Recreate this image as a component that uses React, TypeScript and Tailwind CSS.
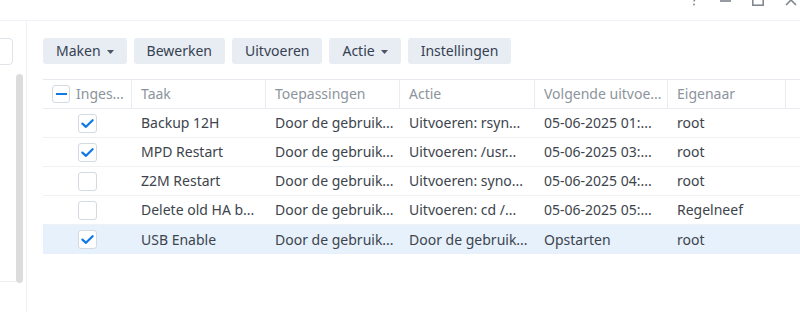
import React from "react";

const Caret = () => (
  <svg width="7" height="4" viewBox="0 0 7 4" className="ml-[6px] mt-[1px]">
    <path d="M0 0 L7 0 L3.5 4 Z" fill="#4a5563" />
  </svg>
);

const Btn = ({ label, caret }: { label: string; caret?: boolean }) => (
  <div className="h-[26px] px-[13px] rounded-[3px] bg-[#e8edf3] text-[#364152] flex items-center text-[14px] leading-none">
    <span>{label}</span>
    {caret && <Caret />}
  </div>
);

const Check = ({ checked }: { checked: boolean }) => (
  <div className="w-[19px] h-[19px] rounded-[3px] border border-[#d3dae2] bg-white flex items-center justify-center">
    {checked && (
      <svg width="17" height="17" viewBox="0 0 17 17">
        <path d="M3.4 8.6 L7 11.8 L13.6 5.2" fill="none" stroke="#1479e6" strokeWidth="2.3" strokeLinecap="round" strokeLinejoin="round" />
      </svg>
    )}
  </div>
);

const rows = [
  { c: true, taak: "Backup 12H", app: "Door de gebruik...", actie: "Uitvoeren: rsyn...", next: "05-06-2025 01:...", owner: "root" },
  { c: true, taak: "MPD Restart", app: "Door de gebruik...", actie: "Uitvoeren: /usr...", next: "05-06-2025 03:...", owner: "root" },
  { c: false, taak: "Z2M Restart", app: "Door de gebruik...", actie: "Uitvoeren: syno...", next: "05-06-2025 04:...", owner: "root" },
  { c: false, taak: "Delete old HA b...", app: "Door de gebruik...", actie: "Uitvoeren: cd /...", next: "05-06-2025 05:...", owner: "Regelneef" },
  { c: true, taak: "USB Enable", app: "Door de gebruik...", actie: "Door de gebruik...", next: "Opstarten", owner: "root", sel: true },
];

const Cell = ({ w, children, head }: { w: string; children?: React.ReactNode; head?: boolean }) => (
  <div className={`${w} shrink-0 h-full flex items-center pl-[9px] pb-[1px] overflow-hidden whitespace-nowrap ${head ? "border-r border-[#e9ecf0] text-[#8c949d]" : ""}`}>
    <span>{children}</span>
  </div>
);

export default function App() {
  return (
    <div className="w-[800px] h-[312px] bg-white overflow-hidden flex flex-col text-[14px] text-[#3d444c]" style={{ fontFamily: "'Noto Sans', 'Open Sans', sans-serif" }}>
      {/* title bar */}
      <div className="h-[21px] shrink-0 border-b border-[#eef1f5] overflow-hidden flex items-start pl-[689px]">
        <svg width="10" height="12" viewBox="0 0 10 12" className="-mt-[6px]">
          <path d="M2 3 C2 0.5 8 0.5 8 3 C8 5 5 5 5 7.5" fill="none" stroke="#7b828a" strokeWidth="1.4" />
          <circle cx="5" cy="10.5" r="0.9" fill="#7b828a" />
        </svg>
        <svg width="11" height="12" viewBox="0 0 11 12" className="-mt-[10px] ml-[21px]">
          <path d="M0 11 H11" stroke="#7b828a" strokeWidth="1.6" />
        </svg>
        <svg width="12" height="12" viewBox="0 0 12 12" className="-mt-[6px] ml-[21px]">
          <rect x="0.8" y="0.8" width="10.4" height="10.4" fill="none" stroke="#7b828a" strokeWidth="1.5" />
        </svg>
        <svg width="12" height="12" viewBox="0 0 12 12" className="-mt-[6px] ml-[21px]">
          <path d="M1 1 L11 11 M11 1 L1 11" fill="none" stroke="#7b828a" strokeWidth="1.5" />
        </svg>
      </div>

      <div className="flex-1 flex min-h-0">
        {/* left panel */}
        <div className="w-[27px] shrink-0 border-r border-[#eef1f5] flex">
          <div className="w-[16px] flex flex-col">
            <div className="mt-[17px] h-[27px] w-[25px] -ml-[12px] rounded-[4px] border border-[#dfe4ea] bg-white" />
            <div className="h-[217px] border-b border-[#eceff2]" />
          </div>
          <div className="w-[7px]">
            <div className="mt-[53px] h-[209px] w-[7px] rounded-[4px] bg-[#dcdcdc]" />
          </div>
        </div>

        {/* main */}
        <div className="flex-1 pl-[16px] pt-[17px] min-w-0">
          <div className="flex gap-[7px]">
            <Btn label="Maken" caret />
            <Btn label="Bewerken" />
            <Btn label="Uitvoeren" />
            <Btn label="Actie" caret />
            <Btn label="Instellingen" />
          </div>

          <div className="mt-[15px] border-t border-[#e6e9ed]">
            <div className="h-[29px] flex border-b border-[#e9ecf0]">
              <div className="w-[89px] shrink-0 h-full flex items-center pl-[9px] border-r border-[#e9ecf0] text-[#8c949d] whitespace-nowrap overflow-hidden">
                <div className="w-[18px] h-[18px] shrink-0 rounded-[3px] border border-[#d3dae2] bg-white flex items-center justify-center">
                  <div className="w-[11px] h-[2px] bg-[#1479e6]" />
                </div>
                <span className="ml-[6px] pb-[1px]">Inges...</span>
              </div>
              <Cell w="w-[134px]" head>Taak</Cell>
              <Cell w="w-[134px]" head>Toepassingen</Cell>
              <Cell w="w-[135px]" head>Actie</Cell>
              <Cell w="w-[133px]" head>Volgende uitvoe...</Cell>
              <Cell w="w-[118px]" head>Eigenaar</Cell>
              <div className="flex-1" />
            </div>
            {rows.map((r, i) => (
              <div key={i} className={`h-[29px] flex ${r.sel ? "bg-[#e6f1fc]" : "border-b border-[#eff1f4]"}`}>
                <div className="w-[89px] shrink-0 h-full flex items-center justify-center">
                  <Check checked={r.c} />
                </div>
                <Cell w="w-[134px]">{r.taak}</Cell>
                <Cell w="w-[134px]">{r.app}</Cell>
                <Cell w="w-[135px]">{r.actie}</Cell>
                <Cell w="w-[133px]">{r.next}</Cell>
                <Cell w="w-[118px]">{r.owner}</Cell>
                <div className="flex-1" />
              </div>
            ))}
          </div>
        </div>
      </div>
    </div>
  );
}
